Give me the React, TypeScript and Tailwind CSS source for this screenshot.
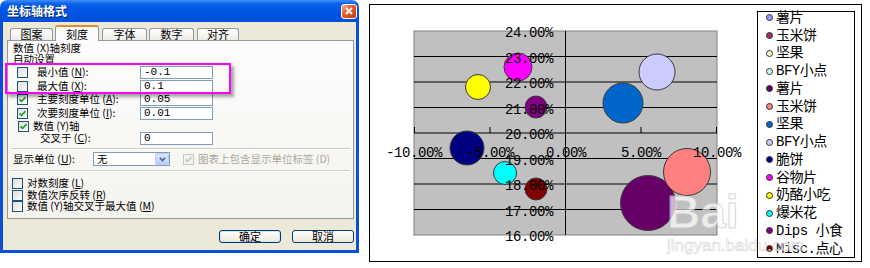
import React from "react"

const dlgFont = "font-['Noto_Sans_CJK_SC',sans-serif]"

function Check({ checked = false, disabled = false }: { checked?: boolean; disabled?: boolean }) {
  return (
    <div
      className={`w-[11px] h-[11px] shrink-0 border ${
        disabled ? "border-[#cac8bb] bg-[#f4f3ee]" : "border-[#1c5180] bg-[linear-gradient(135deg,#dcdcd7,#ffffff)]"
      } flex items-center justify-center`}
    >
      {checked && (
        <svg width="9" height="9" viewBox="0 0 9 9">
          <path
            d="M1.5 4.3 L3.6 6.4 L7.6 2.2"
            fill="none"
            stroke={disabled ? "#cac8bb" : "#21a121"}
            strokeWidth="1.7"
          />
        </svg>
      )}
    </div>
  )
}

function Field({ value }: { value: string }) {
  return (
    <div className="w-[73px] h-[13px] border border-[#7f9db9] bg-white flex items-center pl-[3px] text-[11px] leading-none font-['Liberation_Mono',monospace] text-black">
      {value}
    </div>
  )
}

function Tab({ label, selected = false, w, ml }: { label: string; selected?: boolean; w: string; ml: string }) {
  return (
    <div
      className={`${w} ${ml} flex items-center justify-center text-[11px] leading-none rounded-t-[3px] border border-[#919b9c] ${
        selected
          ? "relative z-10 h-[16px] -mb-[1px] border-b-0 border-t-[#e68b2c] border-t-2 bg-[#fcfcfe]"
          : "h-[12px] border-b-0 bg-[linear-gradient(180deg,#ffffff,#ecebe6)]"
      }`}
    >
      {label}
    </div>
  )
}

function Separator({ h, mt }: { h: string; mt: string }) {
  return (
    <div className={`${h} mx-[3px]`}>
      <div className={`${mt} border-t border-[#d0d0bf] border-b border-b-white`} />
    </div>
  )
}

function Dialog() {
  return (
    <div className={`w-[359px] h-[253px] shrink-0 flex flex-col ${dlgFont} text-black`}>
      {/* title bar */}
      <div className="h-[22px] rounded-t-[7px] bg-[linear-gradient(180deg,#3d8ff8_0%,#0a5fe8_18%,#0054e3_55%,#0250d6_100%)] flex items-center justify-between pl-[7px] pr-[2px]">
        <span className="text-white font-bold text-[12px] leading-none [text-shadow:1px_1px_0_#0a246a]">坐标轴格式</span>
        <div className="w-[16px] h-[15px] rounded-[3px] border border-white bg-[linear-gradient(135deg,#f3a98d,#e3592e_45%,#c53a10)] flex items-center justify-center">
          <svg width="8" height="8" viewBox="0 0 8 8">
            <path d="M1 1 L7 7 M7 1 L1 7" stroke="#fff" strokeWidth="1.8" />
          </svg>
        </div>
      </div>

      {/* body */}
      <div className="h-[231px] border-x-[3px] border-b-[3px] border-[#0a4fd8] bg-[#ece9d8] flex flex-col">
        {/* tabs */}
        <div className="h-[15px] mt-[3px] flex items-end">
          <Tab label="图案" w="w-[43px]" ml="ml-[7px]" />
          <Tab label="刻度" w="w-[44px]" ml="ml-[2px]" selected />
          <Tab label="字体" w="w-[45px]" ml="ml-[3px]" />
          <Tab label="数字" w="w-[45px]" ml="ml-[2px]" />
          <Tab label="对齐" w="w-[42px]" ml="ml-[3px]" />
        </div>

        {/* tab page */}
        <div className="relative ml-[4px] w-[347px] h-[179px] border border-[#919b9c] bg-[linear-gradient(180deg,#fdfdfd,#f4f3ee)] flex flex-col text-[10.5px] leading-none">
          <div className="h-[12px] mt-[1px] pl-[5px] flex items-center">数值 (X)轴刻度</div>
          <div className="h-[11px] pl-[5px] flex items-center">自动设置</div>

          <div className="h-[14px] pl-[9px] flex items-center">
            <Check />
            <span className="ml-[9px] w-[103px]">
              最小值 (<span className="underline">N</span>):
            </span>
            <Field value="-0.1" />
          </div>
          <div className="h-[14px] pl-[9px] flex items-center">
            <Check />
            <span className="ml-[9px] w-[103px]">
              最大值 (<span className="underline">X</span>):
            </span>
            <Field value="0.1" />
          </div>
          <div className="h-[13px] pl-[9px] flex items-center">
            <Check checked />
            <span className="ml-[9px] w-[103px]">
              主要刻度单位 (<span className="underline">A</span>):
            </span>
            <Field value="0.05" />
          </div>
          <div className="h-[14px] pl-[9px] flex items-center">
            <Check checked />
            <span className="ml-[9px] w-[103px]">
              次要刻度单位 (<span className="underline">I</span>):
            </span>
            <Field value="0.01" />
          </div>
          <div className="h-[12px] pl-[10px] flex items-center">
            <Check checked />
            <span className="ml-[4px]">数值 (Y)轴</span>
          </div>
          <div className="h-[13px] pl-[32px] flex items-center">
            <span className="w-[100px]">
              交叉于 (<span className="underline">C</span>):
            </span>
            <Field value="0" />
          </div>

          <Separator h="h-[7px]" mt="mt-[3px]" />

          <div className="h-[14px] pl-[5px] flex items-center">
            <span className="w-[80px]">
              显示单位 (<span className="underline">U</span>):
            </span>
            <div className="w-[77px] h-[14px] border border-[#7f9db9] bg-white flex items-center justify-between pl-[3px]">
              <span>无</span>
              <div className="w-[14px] h-[12px] rounded-[2px] bg-[linear-gradient(180deg,#dce6fd,#b8cdf9)] border border-[#b9cdf8] flex items-center justify-center">
                <svg width="7" height="5" viewBox="0 0 7 5">
                  <path d="M0.8 0.8 L3.5 3.6 L6.2 0.8" fill="none" stroke="#4d6185" strokeWidth="1.5" />
                </svg>
              </div>
            </div>
            <div className="ml-[13px]">
              <Check checked disabled />
            </div>
            <span className="ml-[4px] text-[#aca899]">图表上包含显示单位标签 (D)</span>
          </div>

          <Separator h="h-[11px]" mt="mt-[4px]" />

          <div className="h-[12px] pl-[4px] flex items-center">
            <Check />
            <span className="ml-[4px]">
              对数刻度 (<span className="underline">L</span>)
            </span>
          </div>
          <div className="h-[12px] pl-[4px] flex items-center">
            <Check />
            <span className="ml-[4px]">
              数值次序反转 (<span className="underline">R</span>)
            </span>
          </div>
          <div className="h-[11px] pl-[4px] flex items-center">
            <Check />
            <span className="ml-[4px]">
              数值 (Y)轴交叉于最大值 (<span className="underline">M</span>)
            </span>
          </div>

          {/* highlight drawn over the min/max rows */}
          <div className="absolute left-[-3px] top-[22px] w-[226px] h-[31px] border-2 border-[#ff00ff] shadow-[3px_3px_3px_rgba(0,0,0,0.35)]" />
        </div>

        {/* buttons */}
        <div className="mt-[11px] flex justify-end gap-[11px] pr-[2px]">
          <div className="w-[62px] h-[13px] rounded-[3px] border border-[#003c74] bg-[linear-gradient(180deg,#ffffff,#ece9d8)] shadow-[inset_0_0_0_1px_#cee7ff] flex items-center justify-center text-[11px] leading-none">
            确定
          </div>
          <div className="w-[62px] h-[13px] rounded-[3px] border border-[#003c74] bg-[linear-gradient(180deg,#ffffff,#ece9d8)] flex items-center justify-center text-[11px] leading-none">
            取消
          </div>
        </div>
      </div>
    </div>
  )
}

const bubbles = [
  { cx: 518, cy: 67, r: 14, fill: "#ff00ff" },
  { cx: 478, cy: 87, r: 12.5, fill: "#ffff00" },
  { cx: 536, cy: 107, r: 11, fill: "#800080" },
  { cx: 467, cy: 148, r: 17, fill: "#000080" },
  { cx: 505, cy: 173, r: 11.5, fill: "#00ffff" },
  { cx: 536, cy: 189, r: 11, fill: "#800000" },
  { cx: 657, cy: 72, r: 18, fill: "#ccccff" },
  { cx: 623, cy: 103, r: 20, fill: "#0066cc" },
  { cx: 648, cy: 203, r: 27.5, fill: "#660066" },
  { cx: 687, cy: 172, r: 23.5, fill: "#ff8080" },
]

const yLabels = ["24.00%", "23.00%", "22.00%", "21.00%", "20.00%", "19.00%", "18.00%", "17.00%", "16.00%"]
const xLabels = [
  { x: 414, t: "-10.00%" },
  { x: 490, t: "-5.00%" },
  { x: 566, t: "0.00%" },
  { x: 641, t: "5.00%" },
  { x: 717, t: "10.00%" },
]

const legend = [
  { c: "#9999ff", t: "薯片" },
  { c: "#993366", t: "玉米饼" },
  { c: "#ffffcc", t: "坚果" },
  { c: "#ccffff", t: "BFY小点" },
  { c: "#660066", t: "薯片" },
  { c: "#ff8080", t: "玉米饼" },
  { c: "#0066cc", t: "坚果" },
  { c: "#ccccff", t: "BFY小点" },
  { c: "#000080", t: "脆饼" },
  { c: "#ff00ff", t: "谷物片" },
  { c: "#ffff00", t: "奶酪小吃" },
  { c: "#00ffff", t: "爆米花" },
  { c: "#800080", t: "Dips 小食" },
  { c: "#800000", t: "Misc.点心" },
]

function Chart() {
  const top = 31
  const step = 25.5
  return (
    <div className="relative ml-[10px] mt-[4px] w-[493px] h-[258px] border border-black bg-white flex items-start">
      <svg width="388" height="256" viewBox="370 5 388 256" className="shrink-0">
        <rect x="414" y="31" width="303" height="204" fill="#c0c0c0" stroke="#808080" />
        {[1, 2, 3, 4, 5, 6, 7].map((k) => (
          <line key={k} x1="414" x2="717" y1={top + step * k} y2={top + step * k} stroke="#000" />
        ))}
        <line x1="565.5" x2="565.5" y1="31" y2="235" stroke="#000" />
        {[414.5, 490, 641, 716.5].map((x) => (
          <line key={x} x1={x} x2={x} y1="127" y2="133" stroke="#000" />
        ))}
        {bubbles.map((b, i) => (
          <circle key={i} cx={b.cx} cy={b.cy} r={b.r} fill={b.fill} stroke="#3a3a3a" strokeWidth="1" />
        ))}
        <g fontFamily="'Liberation Mono', monospace" fontSize="14" letterSpacing="-0.4" fill="#000">
          {yLabels.map((t, k) => (
            <text key={t} x="553" y={top + step * k + 6} textAnchor="end">
              {t}
            </text>
          ))}
          {xLabels.map((l) => (
            <text key={l.t} x={l.x} y="157" textAnchor="middle">
              {l.t}
            </text>
          ))}
        </g>
      </svg>

      <div className="-ml-[1px] mt-[6px] w-[98px] h-[247px] border border-black bg-white">
        <div className="-mt-[3px] flex flex-col">
          {legend.map((l, i) => (
            <div key={i} className="h-[17.75px] flex items-center pl-[8px]">
              <div className="w-[7px] h-[7px] rounded-full border border-[#333]" style={{ backgroundColor: l.c }} />
              <span className="ml-[3px] text-[14px] leading-none font-['Liberation_Mono','Noto_Sans_CJK_SC',monospace] tracking-[-0.5px] text-black">
                {l.t}
              </span>
            </div>
          ))}
        </div>
      </div>

      {/* watermark */}
      <div className="absolute left-[297px] top-[184px] pointer-events-none opacity-70">
        <div className="text-[46px] leading-none font-bold font-['Liberation_Sans',sans-serif] text-white [-webkit-text-stroke:1px_#c8c8c8]">
          Bai
        </div>
        <div className="mt-[2px] text-[17px] leading-none font-['Liberation_Sans',sans-serif] text-white [-webkit-text-stroke:0.6px_#c8c8c8]">
          jingyan.baidu.com
        </div>
      </div>
    </div>
  )
}

export default function App() {
  return (
    <div className="w-[870px] h-[268px] bg-white flex items-start overflow-hidden">
      <Dialog />
      <Chart />
    </div>
  )
}
